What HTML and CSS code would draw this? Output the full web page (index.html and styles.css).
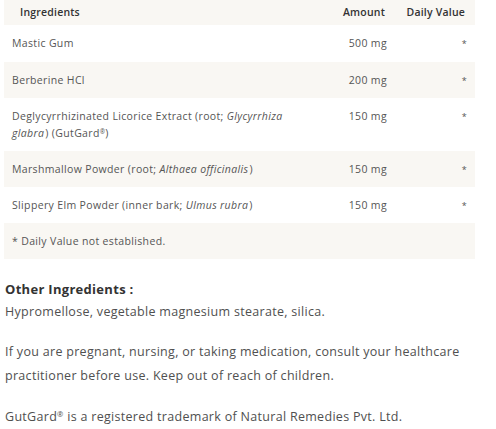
FILE: index.html
```html
<!DOCTYPE html>
<html>
<head>
<meta charset="utf-8">
<link rel="stylesheet" href="styles.css">
</head>
<body>
<div class="page">
  <table class="facts">
    <colgroup>
      <col class="col-name">
      <col class="col-amt">
      <col class="col-dv">
    </colgroup>
    <thead>
      <tr class="shade">
        <th class="c-name">Ingredients</th>
        <th class="c-amt">Amount</th>
        <th class="c-dv">Daily Value</th>
      </tr>
    </thead>
    <tbody>
      <tr>
        <td class="c-name">Mastic Gum</td>
        <td class="c-amt">500 mg</td>
        <td class="c-dv">*</td>
      </tr>
      <tr class="shade">
        <td class="c-name">Berberine HCl</td>
        <td class="c-amt">200 mg</td>
        <td class="c-dv">*</td>
      </tr>
      <tr>
        <td class="c-name">Deglycyrrhizinated Licorice Extract (root; <i>Glycyrrhiza glabra</i>) (GutGard<sup>®</sup>)</td>
        <td class="c-amt">150 mg</td>
        <td class="c-dv">*</td>
      </tr>
      <tr class="shade">
        <td class="c-name">Marshmallow Powder (root; <i>Althaea officinalis</i>)</td>
        <td class="c-amt">150 mg</td>
        <td class="c-dv">*</td>
      </tr>
      <tr>
        <td class="c-name">Slippery Elm Powder (inner bark; <i>Ulmus rubra</i>)</td>
        <td class="c-amt">150 mg</td>
        <td class="c-dv">*</td>
      </tr>
      <tr class="shade">
        <td class="c-name foot" colspan="3">* Daily Value not established.</td>
      </tr>
    </tbody>
  </table>

  <h3 class="other-title">Other Ingredients :</h3>
  <p class="other-text">Hypromellose, vegetable magnesium stearate, silica.</p>
  <p class="note first">If you are pregnant, nursing, or taking medication, consult your healthcare practitioner before use. Keep out of reach of children.</p>
  <p class="note">GutGard<sup>®</sup> is a registered trademark of Natural Remedies Pvt. Ltd.</p>
</div>
</body>
</html>
```
FILE: styles.css
```css
* { box-sizing: border-box; }
html, body { margin: 0; padding: 0; background: #fff; }
body {
  font-family: "Open Sans", "Noto Sans", sans-serif;
  color: #505050;
}
.page {
  padding: 0 4px;
  width: 496px;
}
.facts {
  width: 471px;
  table-layout: fixed;
  border-collapse: collapse;
  font-size: 10.5px;
  letter-spacing: 0.35px;
  line-height: 17px;
  color: #555;
}
.col-name { width: 326px; }
.col-amt { width: 65px; }
.col-dv { width: 80px; }
.facts .shade { background: #f9f7f3; }
.facts th {
  font-weight: 600;
  color: #333;
  padding: 4px 8px;
  font-size: 10.5px;
  letter-spacing: 0.2px;
  line-height: 17px;
  height: 25px;
  white-space: nowrap;
}
.facts td {
  padding: 10px 8px 9px;
  vertical-align: top;
  height: 36px;
}
.facts tbody tr:first-child td { height: 37px; }
.facts td.foot { height: 35px; font-size: 10.5px; }
.c-name { text-align: left; }
.facts th.c-name { padding-left: 16px; }
.facts td.c-name { padding-left: 8px; padding-right: 20px; }
.c-amt, .c-dv { text-align: right; }
.facts td.c-amt { padding-right: 8px; white-space: nowrap; }
.facts th.c-amt { padding-right: 10px; }
.facts td.c-dv { padding-right: 8px; font-size: 9px; }
.facts th.c-dv { padding-right: 10px; }
.facts i { padding-right: 1px; }
sup { font-size: 0.6em; line-height: 0; vertical-align: 0.5em; }
.other-title {
  font-size: 13px;
  font-weight: 700;
  letter-spacing: 0.3px;
  color: #333;
  margin: 21px 0 0 1px;
  line-height: 18px;
}
.other-text {
  margin: 5px 0 0 1px;
  font-size: 12.5px;
  letter-spacing: 0.3px;
  line-height: 18px;
}
.note {
  margin: 17px 0 0 1px;
  font-size: 12.5px;
  letter-spacing: 0.3px;
  line-height: 24px;
  max-width: 470px;
}
.note.first { margin-top: 19px; }
```
